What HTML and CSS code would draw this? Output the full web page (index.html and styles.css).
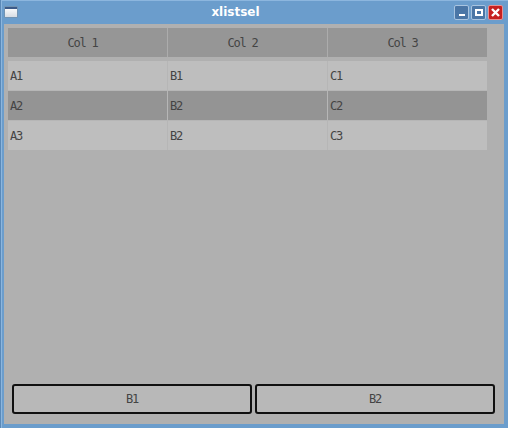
FILE: index.html
```html
<!DOCTYPE html>
<html>
<head>
<meta charset="utf-8">
<link rel="stylesheet" href="styles.css">
</head>
<body>
<div class="window">
  <div class="titlebar">
    <div class="app-icon"><span class="app-icon-bar"></span></div>
    <div class="title">xlistsel</div>
    <div class="controls">
      <div class="ctl ctl-min"><span class="min-bar"></span></div>
      <div class="ctl ctl-max"><span class="max-box"></span></div>
      <div class="ctl ctl-close">
        <svg width="11" height="11" viewBox="0 0 11 11"><path d="M2 2 L9 9 M9 2 L2 9" stroke="#fff" stroke-width="2.4" fill="none"/></svg>
      </div>
    </div>
  </div>
  <div class="client">
    <div class="table">
      <div class="head-row">
        <div class="hcell">Col 1</div>
        <div class="hcell">Col 2</div>
        <div class="hcell">Col 3</div>
      </div>
      <div class="body-rows">
        <div class="row">
          <div class="cell">A1</div><div class="cell">B1</div><div class="cell">C1</div>
        </div>
        <div class="row selected">
          <div class="cell">A2</div><div class="cell">B2</div><div class="cell">C2</div>
        </div>
        <div class="row">
          <div class="cell">A3</div><div class="cell">B2</div><div class="cell">C3</div>
        </div>
      </div>
    </div>
    <div class="buttons">
      <div class="btn">B1</div>
      <div class="btn">B2</div>
    </div>
  </div>
</div>
</body>
</html>
```
FILE: styles.css
```css
html, body {
  margin: 0;
  padding: 0;
  background: #6b9dcc;
}
.window {
  width: 508px;
  height: 428px;
  box-sizing: border-box;
  background: #6b9dcc;
  border-left: 1px solid #5a89b8;
  box-shadow: inset 1px 1px 0 #8cb6de;
  display: flex;
  flex-direction: column;
}
.titlebar {
  height: 24px;
  display: flex;
  align-items: center;
  padding-left: 4px;
}
.app-icon {
  width: 12px;
  height: 10px;
  background: linear-gradient(#ffffff, #d8dde4);
  box-sizing: border-box;
  box-shadow: 0 0 0 0.5px #7a8a9a;
}
.app-icon-bar {
  display: block;
  height: 2px;
  background: #3c5a88;
}
.title {
  flex: 1;
  text-align: center;
  color: #ffffff;
  font-family: "DejaVu Sans", sans-serif;
  font-weight: bold;
  font-size: 12px;
  padding-bottom: 1px;
}
.controls {
  display: flex;
  gap: 2px;
  margin-right: 5px;
  margin-top: 1px;
}
.ctl {
  width: 15px;
  height: 15px;
  box-sizing: border-box;
  border: 1px solid #a8c4e0;
  border-radius: 2px;
  display: flex;
  align-items: center;
  justify-content: center;
  position: relative;
}
.ctl-min, .ctl-max {
  background: #4a76a6;
}
.ctl-close {
  background: #c62020;
  border-color: #e89090;
}
.min-bar {
  position: absolute;
  left: 4px;
  bottom: 3px;
  width: 6px;
  height: 2px;
  background: #fff;
}
.max-box {
  width: 8px;
  height: 7px;
  box-sizing: border-box;
  border: 2px solid #fff;
}
.client {
  flex: 1;
  margin: 0 4px 4px 3px;
  background: #b0b0b0;
  padding: 4px 0 0 4px;
  display: flex;
  flex-direction: column;
  font-family: "DejaVu Sans Mono", monospace;
  font-size: 12px;
  letter-spacing: -1.2px;
  color: #444444;
}
.table {
  width: 479px;
}
.head-row {
  display: grid;
  grid-template-columns: 159px 159px 159px;
  column-gap: 1px;
  background: #acacac;
  height: 29px;
  margin-bottom: 4px;
}
.hcell {
  background: #969696;
  display: flex;
  align-items: center;
  justify-content: center;
  padding-right: 10px;
}
.body-rows {
  display: flex;
  flex-direction: column;
  gap: 1px;
  background: #b6b6b6;
}
.row {
  display: grid;
  grid-template-columns: 159px 159px 159px;
  column-gap: 1px;
  height: 29px;
}
.cell {
  background: #bebebe;
  display: flex;
  align-items: center;
  padding-left: 2px;
}
.row.selected .cell {
  background: #949494;
}
.buttons {
  margin-top: auto;
  margin-left: -4px;
  padding: 0 8px 10px 8px;
  display: grid;
  grid-template-columns: 240px 240px;
  column-gap: 3px;
}
.btn {
  height: 30px;
  box-sizing: border-box;
  border: 2px solid #101010;
  border-radius: 3px;
  background: #b8b8b8;
  display: flex;
  align-items: center;
  justify-content: center;
}
```
